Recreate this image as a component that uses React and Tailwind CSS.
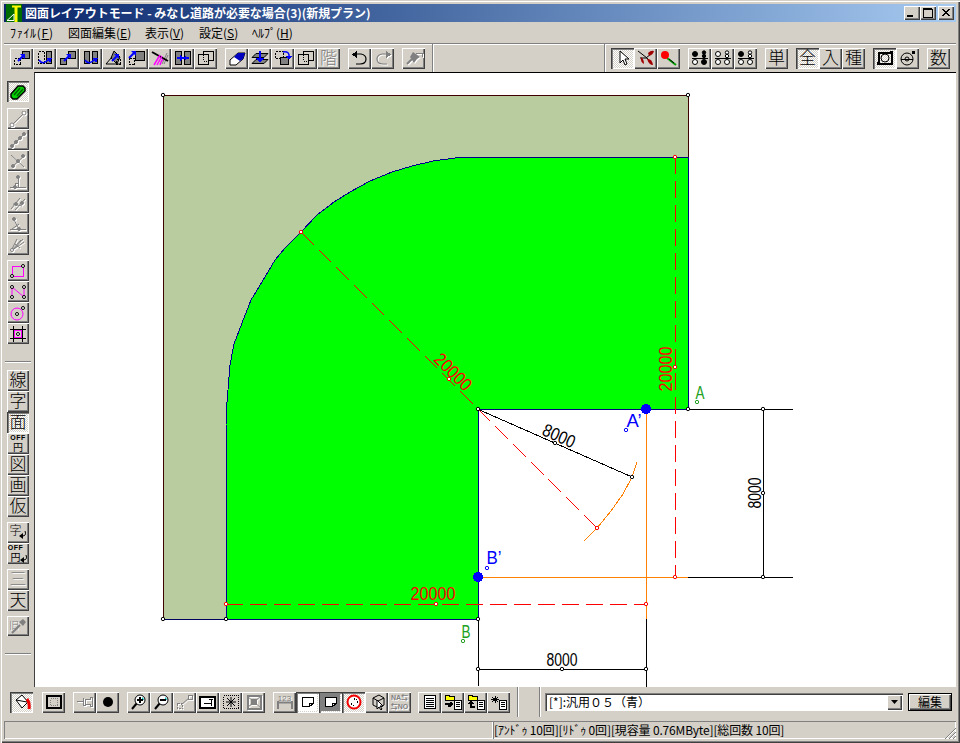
import React from "react";

const FONT = "[font-family:'Noto_Sans_CJK_JP','Liberation_Sans',sans-serif]";
const KFONT = "[font-family:'Liberation_Sans','Noto_Sans_CJK_JP',sans-serif]";
const UP = "shadow-[inset_1px_1px_0_#fff,inset_-1px_-1px_0_#404040,inset_-2px_-2px_0_#808080]";
const DOWN = "shadow-[inset_1px_1px_0_#404040,inset_2px_2px_0_#808080,inset_-1px_-1px_0_#fff]";
const DITHER = "bg-[repeating-conic-gradient(#d4d0c8_0_25%,#fff_0_50%)] bg-[length:2px_2px]";
const BLUE = "#0000ff";
const GR = "#808080";
const MAG = "#ff00ff";

function Btn({ on, children, className = "w-[23px] h-[21px]" }) {
  return (
    <div className={`flex shrink-0 items-center justify-center ${className} ${on ? DOWN + " " + DITHER : UP}`}>
      {children}
    </div>
  );
}

function Ico({ off, children }) {
  return (
    <svg
      width="18"
      height="16"
      viewBox="0 0 18 16"
      fill="none"
      shapeRendering="crispEdges"
      className={off ? "drop-shadow-[1px_1px_0_#fff]" : ""}
    >
      {children}
    </svg>
  );
}

function Kanji({ off, children, size = "text-[17px]" }) {
  return (
    <span className={`${KFONT} ${size} font-light leading-none ${off ? "text-[#808080] [text-shadow:1px_1px_0_#fff]" : "text-black"}`}>
      {children}
    </span>
  );
}

const Arrow = ({ x = 0, y = 0 }) => (
  <g transform={`translate(${x} ${y})`} shapeRendering="auto">
    <path d="M1 8 L6 3" stroke={BLUE} strokeWidth="2" />
    <path d="M3 1 H8 V6 Z" fill={BLUE} />
  </g>
);
const Gray = (p) => <rect fill={GR} stroke="#000" {...p} />;
const Dash = (p) => <rect stroke="#000" strokeDasharray="2 1" {...p} />;
const Dot = ({ x, y, c = "#000", r = 1.5, f = "#fff" }) => <circle cx={x} cy={y} r={r} stroke={c} fill={f} shapeRendering="auto" />;
const Ln = ({ d, c = "#000", w = 1 }) => <path d={d} stroke={c} strokeWidth={w} shapeRendering="auto" />;
const Note = ({ fill = "#fff" }) => <path d="M3.5 3.5 H14.5 V9.5 L10.5 12.5 H3.5 Z M10.5 12.5 V9.5 H14.5" stroke="#000" fill={fill} />;
const List = ({ x = 0, y = 0, w = 7, h = 9 }) => (
  <g transform={`translate(${x} ${y})`}>
    <rect x=".5" y=".5" width={w} height={h} fill="#fff" stroke="#000" />
    <path d={`M2 2.5H${w - 1}M2 4.5H${w - 1}M2 6.5H${w - 1}`} stroke="#000" />
  </g>
);
const Folder = () => <path d="M1.5 1.5 H5 L6 2.5 H10.5 V6.5 H1.5 Z" fill="#ffff00" stroke="#000" />;
const Dots = ({ fill }) => (
  <>
    <circle cx="4" cy="4" r="2.500" fill={fill[0] ? "#000" : "#fff"} stroke="#000" shapeRendering="auto" />
    <circle cx="4" cy="12" r="2.500" fill={fill[2] ? "#000" : "#fff"} stroke="#000" shapeRendering="auto" />
    <circle cx="13" cy="2.500" r="1.700" fill={fill[1] ? "#000" : "#fff"} stroke="#000" shapeRendering="auto" />
    <circle cx="13" cy="6" r="1.700" fill={fill[1] ? "#000" : "#fff"} stroke="#000" shapeRendering="auto" />
    <path d="M1 8.500H17" stroke="#000" />
    <circle cx="13" cy="12" r="2.500" fill={fill[3] ? "#000" : "#fff"} stroke="#000" shapeRendering="auto" />
  </>
);

const topA = [
  <Ico><Dash x="1.5" y="8.5" width="6" height="6" /><Gray x="9.5" y="1.5" width="7" height="7" /><Arrow x="4" y="3" /></Ico>,
  <Ico><Dash x="2.5" y="1.5" width="6" height="12" /><Gray x="10.5" y="1.5" width="5" height="12" /><Ln d="M3 10 Q7 16 13 9" c={BLUE} w={1.5} /><path d="M11 8h5l-2 5z" fill={BLUE} /></Ico>,
  <Ico><Gray x="1.5" y="8.5" width="6" height="6" /><Gray x="9.5" y="1.5" width="7" height="7" /><Arrow x="4" y="3" /></Ico>,
  <Ico><Gray x="2.5" y="1.5" width="5" height="12" /><Gray x="10.5" y="1.5" width="5" height="12" /><Ln d="M3 10 Q7 16 13 9" c={BLUE} w={1.5} /><path d="M11 8h5l-2 5z" fill={BLUE} /></Ico>,
  <Ico><path d="M9 1 L15 7 L12 14 L6 8 Z" fill={GR} stroke="#000" shapeRendering="auto" /><Ln d="M1 14 L7 7 M1 14 H15" /><Dash x="11.5" y="9.5" width="4" height="5" /><Arrow x="6" y="3" /></Ico>,
  <Ico><Dash x="1.5" y="8.5" width="5" height="6" /><Gray x="7.5" y="1.5" width="9" height="9" /><Arrow x="0" y="0" /></Ico>,
  <Ico><Ln d="M11 14 L16 3 M13 14 L17 5" c={GR} /><Ln d="M1 2 L17 11" w={2} /><Ln d="M3 15 L9 5 M6 15 L11 6 M9 15 Q10 11 12 9" c={MAG} w={1.5} /></Ico>,
  <Ico><Gray x="1.5" y="1.5" width="6" height="13" /><Gray x="10.5" y="1.5" width="6" height="13" /><path d="M3 8H15" stroke={BLUE} strokeWidth="2" /><path d="M6 5v6l3-3zM12 5v6l-3-3z" fill={BLUE} /></Ico>,
  <Ico><rect x="6.5" y="1.5" width="10" height="9" stroke="#000" /><rect x="1.5" y="4.5" width="10" height="10" stroke="#000" fill="#d4d0c8" /><path d="M6.5 5V11H11" stroke="#000" strokeDasharray="1 1" /></Ico>,
];
const topB = [
  <Ico><path d="M2 10 L10 3 H17 L15 9 L8 15 H2 Z" fill="#fff" stroke="#000" shapeRendering="auto" /><path d="M6 7 L10 3 H17 L15 9 L12 11 Z" fill="#0000c0" shapeRendering="auto" /></Ico>,
  <Ico><path d="M5 3.5H17L13 7.5H1Z M5 9.5H17L13 13.5H1Z" fill={GR} stroke="#000" shapeRendering="auto" /><path d="M9 1V10" stroke={BLUE} strokeWidth="2" /><path d="M5 8h8l-4 5z" fill={BLUE} /></Ico>,
  <Ico><Dash x="1.5" y="1.5" width="8" height="7" /><Gray x="6.5" y="7.5" width="8" height="7" /><Ln d="M9 2 Q16 1 15 7" c={BLUE} w={1.5} /><path d="M12 6h6l-3 4z" fill={BLUE} /></Ico>,
  <Ico><rect x="6.5" y="1.5" width="10" height="9" stroke="#000" /><rect x="1.5" y="4.5" width="10" height="10" stroke="#000" fill="#d4d0c8" /><path d="M6.5 5V11H11" stroke="#000" strokeDasharray="1 1" /></Ico>,
  <Kanji off>階</Kanji>,
];
const topC = [
  <Ico><Ln d="M4 4 H10 Q15 5 15 9 Q15 14 9 14 H5" w={1.2} /><path d="M6 1V8L1 4.500Z" fill="#000" /></Ico>,
  <Ico off><Ln d="M14 4 H8 Q3 5 3 9 Q3 14 9 14 H13" c={GR} w={1.2} /><path d="M12 1V8L17 4.500Z" fill={GR} /></Ico>,
];
const topPin = (
  <Ico off><path d="M8 2 L15 7 L12 9 L9 13 L5 7 Z" fill={GR} shapeRendering="auto" /><Ln d="M2 14 L7 9" c={GR} w={2} /><path d="M11 3h6v4" stroke={GR} /></Ico>
);
const leaves = (
  <Ico><path d="M1 1 L10 8 L15 14 M3 8 L10 8 M9 8 L14 4" stroke="#000" shapeRendering="auto" /><path d="M11 3 Q14 0 17 1 Q16 5 12 6Z M10 9 Q15 8 16 15 Q12 15 10 9Z M4 7 Q7 9 7 14 Q3 12 4 7Z" fill="#a00000" shapeRendering="auto" /></Ico>
);
const dropper = (
  <Ico><Ln d="M7 8 L16 15" c="#00a000" w={2} /><Ln d="M9 9 L14 13" c="#000" w={1} /><circle cx="5" cy="5" r="4" fill="#ff0000" shapeRendering="auto" /></Ico>
);

const sideLines = [
  <Ico off><Ln d="M3 14 L15 2" c={GR} /><Dot x={3} y={14} c={GR} r={2} /><Dot x={15} y={2} c={GR} r={2} /></Ico>,
  <Ico off><Ln d="M3 14 L15 2" c={GR} /><Dot x={3} y={14} c={GR} f={GR} /><Dot x={7} y={10} c={GR} f={GR} /><Dot x={11} y={6} c={GR} f={GR} /><Dot x={15} y={2} c={GR} f={GR} /></Ico>,
  <Ico off><Ln d="M2 2 L15 14 M3 14 L16 2" c={GR} /><Dot x={4} y={13} c={GR} f={GR} /><Dot x={14} y={3} c={GR} f={GR} /><Dot x={9} y={8} c={GR} f={GR} /></Ico>,
  <Ico off><path d="M1 13.500H17M9 2V13M6 13V9H9" stroke={GR} /><Dot x={9} y={3} c={GR} f={GR} /><Dot x={6} y={13} c={GR} f={GR} /></Ico>,
  <Ico off><Ln d="M2 14 L11 3 M6 15 L16 4 M4 9 L13 11" c={GR} /><Dot x={7} y={9} c={GR} f={GR} /><Dot x={13} y={8} c={GR} f={GR} /></Ico>,
  <Ico off><path d="M1 13.500H17" stroke={GR} /><Ln d="M4 2 L10 13 M10 8 L3 13" c={GR} /><Dot x={5} y={3} c={GR} f={GR} /><Dot x={10} y={13} c={GR} f={GR} /></Ico>,
  <Ico off><Ln d="M2 14 L8 2 M2 14 L12 3 M2 14 L15 5 M5 12 L14 2 M6 7 L11 11" c={GR} /><Dot x={3} y={13} c={GR} /></Ico>,
];
const sideShapes = [
  <Ico><rect x="3.5" y="3.5" width="11" height="10" stroke={MAG} /><Dot x={3} y={13} /><Dot x={14} y={3} /></Ico>,
  <Ico><Ln d="M3 13 V3 L15 13 V3" c={MAG} /><Dot x={3} y={3} /><Dot x={3} y={13} /><Dot x={15} y={3} /><Dot x={15} y={13} /></Ico>,
  <Ico><circle cx="8" cy="9" r="6" stroke={MAG} shapeRendering="auto" /><Dot x={8} y={9} /><Dot x={14} y={3} /></Ico>,
  <Ico><rect x="4" y="3" width="10" height="10" fill={MAG} /><rect x="6" y="5" width="6" height="6" fill="#d4d0c8" /><path d="M1 3.500H17M1 12.500H17M4.500 0V16M13.500 0V16" stroke="#000" /><Dot x={9} y={8} /></Ico>,
];
const offText = (
  <span className={`${KFONT} flex flex-col items-center text-black`}>
    <span className="text-[7px] font-bold leading-[8px] tracking-[0.5px]">OFF</span>
    <span className="text-[10px] leading-[12px]">円</span>
  </span>
);
const backArrow = (
  <svg width="8" height="9" viewBox="0 0 8 9" fill="none" className="-ml-[3px] self-end">
    <path d="M6 0 Q8 5 3 5" stroke="#000" />
    <path d="M4 2V8L0 5Z" fill="#000" />
  </svg>
);

const bottomA = [
  <Ico><path d="M3 6 L9 1 L15 8 L9 14 Z" fill="#fff" stroke="#000" shapeRendering="auto" /><Ln d="M14 5 Q17 9 16 15" c="#f00000" w={3} /><Ln d="M3 6 L14 8" /></Ico>,
];
const bottomB = (
  <Ico><rect x="2" y="2" width="14" height="12" stroke="#000" strokeWidth="2" /><rect x="5.500" y="4.500" width="7" height="7" stroke={GR} strokeDasharray="1 1" /></Ico>
);
const pin = (
  <Ico off><path d="M1 7.500H7 M7 4V11H9V5H14V3H16V12H14V10H9" stroke={GR} /></Ico>
);
const zoomIco = (sign) => (
  <Ico>
    <Ln d="M2 15 L7 9" w={2} />
    <circle cx="10" cy="6" r="5" fill="#fff" stroke="#000" shapeRendering="auto" />
    <path d="M12 3 A4 4 0 0 1 14 6 H12Z" fill="#00c0c0" shapeRendering="auto" />
    <path d={sign ? "M7 6H13M10 3V9" : "M7 6H13"} stroke="#000" strokeWidth="2" />
  </Ico>
);
const bottomC = [
  zoomIco(true),
  zoomIco(false),
  <Ico off><Dash x="1.500" y="9.500" width="5" height="5" stroke={GR} /><rect x="12.500" y="1.500" width="4" height="4" stroke={GR} /><Ln d="M5 11 L13 4" c={GR} /></Ico>,
  <Ico><rect x="1" y="3" width="15" height="11" stroke="#000" strokeWidth="2" fill="#fff" /><path d="M5 9H12M12 5V12M10 5H14" stroke="#000" /></Ico>,
  <Ico><rect x="1.500" y="1.500" width="15" height="13" stroke="#000" strokeDasharray="1 1" /><Ln d="M9 3V13M4 8H14M5 4L13 12M13 4L5 12" c="#000" /></Ico>,
  <Ico off><rect x="2.500" y="1.500" width="13" height="13" stroke={GR} strokeWidth="2" /><rect x="6" y="5" width="6" height="6" fill={GR} /><Ln d="M2 14 L16 2 M2 2 L16 14" c={GR} /></Ico>,
];
const bottomD = [
  { el: <span className="relative flex h-[16px] w-[18px] justify-center"><span className={`${KFONT} text-[8px] leading-[9px] text-[#808080] [text-shadow:1px_1px_0_#fff]`}>123</span><svg width="18" height="16" viewBox="0 0 18 16" fill="none" className="absolute left-0 top-0"><path d="M2 7V15M16 7V15M1 8.500H17" stroke={GR} strokeWidth="2" /></svg></span> },
  { on: true, el: <Ico><Note /></Ico>, white: true },
  { on: true, el: <Ico><Note /></Ico>, dark: true },
  { on: true, el: <Ico><circle cx="9" cy="8" r="6.500" fill="#fff" stroke="#f00000" strokeWidth="2" shapeRendering="auto" /><path d="M6 9v2M9 4v2M12 7v2M8 11h1M11 5h1" stroke="#000" /></Ico> },
  { el: <Ico><path d="M5 4 L11 1 L16 4 V11 L11 14 L5 11 Z M5 4 L10 7 V14 M10 7 L16 4" stroke="#000" shapeRendering="auto" /><path d="M9 6 L9 15 L11 13 L13 16 L14 15 L12 12 L15 12 Z" fill="#fff" stroke="#000" shapeRendering="auto" /></Ico> },
  { el: <span className={`${KFONT} flex flex-col items-center text-[7px] font-bold leading-[9px] text-[#808080] [text-shadow:1px_1px_0_#fff]`}><span>NA⇆</span><span>⇆NO</span></span> },
];
const bottomE = [
  <Ico><rect x="3.500" y="1.500" width="11" height="13" fill="#fff" stroke="#000" /><path d="M5 4H13M5 6H13M5 8H13M5 10H13M5 12H13" stroke="#000" /></Ico>,
  <Ico><Folder /><path d="M1 9.500H5V13" stroke="#000" strokeWidth="2" /><path d="M6 7.500L10 10L6 13Z" fill="#000" /><List x={10} y={6} /></Ico>,
  <Ico><Folder /><path d="M8 12.500H4V9" stroke="#000" strokeWidth="2" /><path d="M1 9.500L4 6L7 9.500Z" fill="#000" /><List x={10} y={6} /></Ico>,
  <Ico><path d="M5 2V9M2 3L8 8M8 3L2 8M1 5.500H9" stroke="#000" /><List x={9} y={6} /></Ico>,
];

function Sep() {
  return <div className="h-full w-[2px] shrink-0 border-l border-l-[#808080] border-r border-r-white" />;
}

function TopBar() {
  return (
    <div className="flex h-[29px] shrink-0 items-center border-t border-t-[#808080] shadow-[inset_0_1px_0_#fff] pl-[6px]">
      <div className="flex">{topA.map((x, i) => <Btn key={i}>{x}</Btn>)}</div>
      <div className="ml-[8px] flex">{topB.map((x, i) => <Btn key={i}>{x}</Btn>)}</div>
      <div className="ml-[8px] flex">{topC.map((x, i) => <Btn key={i}>{x}</Btn>)}</div>
      <div className="ml-[8px] flex"><Btn>{topPin}</Btn></div>
      <div className="ml-[7px]"><div className="h-[29px]"><Sep /></div></div>
      <div className="ml-[170px] h-[29px]"><Sep /></div>
      <div className="ml-[5px] flex">
        <Btn on><Ico><path d="M6 1 V13 L9 10 L11 15 L13 14 L11 9 L15 9 Z" fill="#fff" stroke="#000" shapeRendering="auto" /></Ico></Btn>
        <Btn>{leaves}</Btn>
        <Btn>{dropper}</Btn>
      </div>
      <div className="ml-[8px] flex">
        <Btn><Ico><Dots fill={[1, 1, 0, 1]} /></Ico></Btn>
        <Btn><Ico><Dots fill={[0, 0, 0, 0]} /></Ico></Btn>
        <Btn><Ico><Dots fill={[1, 0, 0, 0]} /></Ico></Btn>
      </div>
      <div className="ml-[8px] flex"><Btn><Kanji>単</Kanji></Btn></div>
      <div className="ml-[8px] flex">
        <Btn on><Kanji>全</Kanji></Btn>
        <Btn><Kanji>入</Kanji></Btn>
        <Btn><Kanji>種</Kanji></Btn>
      </div>
      <div className="ml-[8px] flex">
        <Btn on><Ico><rect x="2.500" y="2.500" width="13" height="11" stroke="#000" strokeWidth="2" /><circle cx="9" cy="8" r="4" stroke="#000" shapeRendering="auto" /><rect x="14" y="1" width="3" height="3" fill="#000" /><rect x="1" y="12" width="3" height="3" fill="#000" /></Ico></Btn>
        <Btn><Ico><circle cx="8" cy="9" r="6" stroke="#000" shapeRendering="auto" /><circle cx="8" cy="9" r="2" stroke="#000" shapeRendering="auto" /><path d="M2 9H14" stroke="#000" /><rect x="13" y="1" width="3" height="3" fill="#000" /></Ico></Btn>
      </div>
      <div className="ml-[8px] flex"><Btn><Kanji>数</Kanji></Btn></div>
    </div>
  );
}

function SideBar() {
  const s = "w-[22px] h-[21px]";
  return (
    <div className="flex w-[30px] shrink-0 flex-col items-start pl-[3px] pt-[9px]">
      <Btn on className={s}>
        <Ico><path d="M2 10 L9 2 H14 L16 4 V7 L8 15 H4 L2 13 Z" fill="#00d000" stroke="#000" strokeWidth="1.500" shapeRendering="auto" /><path d="M5 11 L11 4 M8 12 L14 5" stroke="#006000" strokeWidth="1.500" shapeRendering="auto" /></Ico>
      </Btn>
      <div className="mt-[6px] flex flex-col">{sideLines.map((x, i) => <Btn key={i} className={s}>{x}</Btn>)}</div>
      <div className="mt-[5px] flex flex-col">{sideShapes.map((x, i) => <Btn key={i} className={s}>{x}</Btn>)}</div>
      <div className="mt-[17px] h-[2px] w-[26px] -ml-[2px] border-t border-t-[#808080] border-b border-b-white" />
      <div className="mt-[7px] flex flex-col">
        <Btn className={s}><Kanji>線</Kanji></Btn>
        <Btn className={s}><Kanji>字</Kanji></Btn>
        <Btn on className={s}><Kanji>面</Kanji></Btn>
        <Btn className={s}>{offText}</Btn>
        <Btn className={s}><Kanji>図</Kanji></Btn>
        <Btn className={s}><Kanji>画</Kanji></Btn>
        <Btn className={s}><Kanji>仮</Kanji></Btn>
      </div>
      <div className="mt-[5px] flex flex-col">
        <Btn className={s}><span className="flex h-[15px] items-start"><Kanji size="text-[12px]">字</Kanji>{backArrow}</span></Btn>
        <Btn className={s}><span className="flex h-[20px] items-center">{offText}{backArrow}</span></Btn>
      </div>
      <div className="mt-[5px] flex flex-col">
        <Btn className={s}><Kanji off>三</Kanji></Btn>
        <Btn className={s}><Kanji>天</Kanji></Btn>
      </div>
      <div className="mt-[5px]">
        <Btn className="w-[22px] h-[20px]">
          <span className="relative flex h-[16px] w-[18px] items-center">
            <Kanji off size="text-[10px]">旧</Kanji>
            <svg width="18" height="16" viewBox="0 0 18 16" fill="none" className="absolute left-0 top-0"><path d="M3 15 L11 7" stroke={GR} strokeWidth="2" /><path d="M10 4 L14 1 L17 4 L14 8 Z" fill={GR} /></svg>
          </span>
        </Btn>
      </div>
      <div className="mt-[17px] h-[2px] w-[26px] -ml-[2px] border-t border-t-[#808080] border-b border-b-white" />
    </div>
  );
}

function Mark({ x, y, c = "#000" }) {
  return <circle cx={x} cy={y} r="1.700" fill="#fff" stroke={c} shapeRendering="auto" />;
}

function Num({ x, y, r = 0, c, w = 45, children }) {
  return (
    <text
      x={x}
      y={y}
      transform={`rotate(${r} ${x} ${y})`}
      fill={c}
      fontFamily="'Liberation Sans', sans-serif"
      fontSize="18"
      textAnchor="middle"
      textLength={w}
      lengthAdjust="spacingAndGlyphs"
      dominantBaseline="central"
    >
      {children}
    </text>
  );
}

function Drawing() {
  const arc = "226,425 227,402 230,365 234,344 242,323 251,300 262,282 275,260 285,248 301,232 317,215 334,202 350,192 370,181 392,172 412,166 433,161 455,158 478,157";
  const red = "#ff0000";
  const dash = "17 7";
  return (
    <svg width="920" height="614" viewBox="35 73 920 614" className="block" shapeRendering="crispEdges">
      <polygon points={`163,95 688,95 688,157 ${arc.split(" ").reverse().join(" ")} 226,619 163,619`} fill="#b8cca0" />
      <polygon points={`226,619 ${arc} 688,157 688,409 478,409 478,619`} fill="#00ff00" />
      <path d="M163.500 619.500 V95.500 H688.500 V157" stroke="#400000" fill="none" />
      <path d="M163 619.500 H226" stroke="#000060" fill="none" />
      <polyline points={`226,619 ${arc}`} stroke="#000090" fill="none" />
      <path d="M478 157.500 H688.500 V409.500 H478.500 V619.500 H226" stroke="#000080" fill="none" />

      <path d="M688 409.500 H793 M688 577.500 H793 M763.500 409 V577 M478.500 619 V686 M646.500 619 V687 M478 669.500 H646" stroke="#000" fill="none" />
      <path d="M478 577.500 H688 M646.500 409 V619" stroke="#ff8000" fill="none" />
      <polyline points="637,462 632,477 623,494 611,511 597,528 584,541" stroke="#ff8000" fill="none" />
      <path d="M478.500 409.500 L632 477" stroke="#000" fill="none" />

      <path d="M675.500 157 V577 M226 604.500 H646" stroke={red} fill="none" strokeDasharray={dash} />
      <path d="M301 232 L597 528" stroke={red} fill="none" strokeDasharray="18 7" />

      <Num x={453} y={372} r={45} c={red}>20000</Num>
      <Num x={666} y={369} r={-90} c={red}>20000</Num>
      <Num x={433} y={594} c={red}>20000</Num>
      <Num x={559} y={436} r={24} c="#000" w={34}>8000</Num>
      <Num x={755} y={493} r={-90} c="#000" w={31}>8000</Num>
      <Num x={562} y={660} c="#000" w={31}>8000</Num>

      {[[163, 95], [688, 95], [163, 619], [226, 619], [478, 619], [688, 409], [763, 409], [763, 493], [763, 577], [478, 669], [562, 669], [646, 669], [478, 409], [555, 443], [632, 477]].map(([x, y]) => (
        <Mark key={x + "-" + y} x={x} y={y} />
      ))}
      {[[301, 232], [675, 157], [675, 367], [675, 577], [597, 528], [646, 604], [226, 604], [436, 604], [449, 379]].map(([x, y]) => (
        <Mark key={x + "-" + y} x={x} y={y} c={red} />
      ))}

      <circle cx="646" cy="409" r="5" fill={BLUE} />
      <circle cx="478" cy="577" r="5" fill={BLUE} />

      <Num x={634} y={421} c={BLUE} w={15}>A’</Num>
      <Mark x={626} y={430} c={BLUE} />
      <Num x={494} y={558} c={BLUE} w={15}>B’</Num>
      <Mark x={487} y={568} c={BLUE} />
      <Num x={700} y={393} c="#20a020" w={9}>A</Num>
      <Mark x={697} y={402} c="#20a020" />
      <Num x={466} y={632} c="#20a020" w={9}>B</Num>
      <Mark x={463} y={641} c="#20a020" />
    </svg>
  );
}

function BottomBar() {
  return (
    <div className="flex h-[30px] shrink-0 items-center pl-[6px]">
      <Btn on>{bottomA[0]}</Btn>
      <div className="ml-[9px]"><Btn>{bottomB}</Btn></div>
      <div className="ml-[8px] flex">
        <Btn>{pin}</Btn>
        <Btn><Ico><circle cx="9" cy="8" r="5" fill="#000" shapeRendering="auto" /></Ico></Btn>
      </div>
      <div className="ml-[8px] flex">{bottomC.map((x, i) => <Btn key={i}>{x}</Btn>)}</div>
      <div className="ml-[8px] flex">
        {bottomD.map((b, i) => (
          <div key={i} className="relative">
            <Btn on={b.on}>
              {b.white && <span className="absolute inset-[2px] bg-white" />}
              {b.dark && <span className="absolute inset-[2px] bg-[#808080]" />}
              <span className="relative flex">{b.el}</span>
            </Btn>
          </div>
        ))}
      </div>
      <div className="ml-[7px] flex">{bottomE.map((x, i) => <Btn key={i}>{x}</Btn>)}</div>
      <div className="ml-[7px] h-[30px]"><Sep /></div>
      <div className="ml-[20px] h-[30px]"><Sep /></div>
      <div className="ml-[4px] flex h-[18px] w-[358px] items-center justify-between bg-white pl-[4px] pr-[1px] shadow-[inset_1px_1px_0_#808080,inset_2px_2px_0_#404040,inset_-1px_-1px_0_#fff]">
        <span className={`${FONT} text-[12px] leading-none text-black`}>[*]:汎用０５（青）</span>
        <span className={`flex h-[15px] w-[15px] items-center justify-center bg-[#d4d0c8] ${UP}`}>
          <svg width="7" height="4" viewBox="0 0 7 4"><path d="M0 0H7L3.500 4Z" fill="#000" /></svg>
        </span>
      </div>
      <div className={`${FONT} ml-[5px] flex h-[18px] w-[44px] items-center justify-center border border-black text-[12px] leading-none text-black ${UP}`}>
        編集
      </div>
    </div>
  );
}

function StatusBar() {
  return (
    <div className="flex h-[18px] shrink-0 mt-[4px] text-black">
      <div className="w-[489px] shadow-[inset_1px_1px_0_#808080,inset_-1px_-1px_0_#fff]" />
      <div className={`${FONT} flex flex-1 items-center pl-[1px] text-[12px] leading-none tracking-[-0.15px] shadow-[inset_1px_1px_0_#808080,inset_-1px_-1px_0_#fff]`}>
        [ｱﾝﾄﾞｩ 10回][ﾘﾄﾞｩ 0回][現容量 0.76MByte][総回数 10回]
        <svg width="12" height="12" viewBox="0 0 12 12" className="ml-auto self-end" fill="none">
          <path d="M1 12L12 1M5 12L12 5M9 12L12 9" stroke="#808080" />
          <path d="M2 12L12 2M6 12L12 6M10 12L12 10" stroke="#fff" />
        </svg>
      </div>
    </div>
  );
}

export default function App() {
  const menu = [
    ["ﾌｧｲﾙ(", "F", ")", "w-[58px] tracking-[0.7px]"],
    ["図面編集(", "E", ")", "w-[77px]"],
    ["表示(", "V", ")", "w-[54px]"],
    ["設定(", "S", ")", "w-[53px]"],
    ["ﾍﾙﾌﾟ(", "H", ")", "w-[50px]"],
  ];
  return (
    <div className="flex h-[743px] w-[960px] flex-col overflow-hidden bg-[#d4d0c8] p-[4px] shadow-[inset_1px_1px_0_#d4d0c8,inset_2px_2px_0_#fff,inset_-1px_-1px_0_#404040,inset_-2px_-2px_0_#808080]">
      <div className="flex h-[18px] shrink-0 items-center bg-gradient-to-r from-[#0a246a] to-[#a6caf0] pl-[1px] pr-[2px]">
        <svg width="17" height="18" viewBox="0 0 17 18" className="shrink-0" fill="none">
          <rect x="1" y="0" width="16" height="18" fill="#006c00" />
          <path d="M7 2.500H16" stroke="#ffff00" strokeWidth="2" />
          <path d="M11 2V18" stroke="#ffff00" strokeWidth="3" />
          <path d="M2 16.500H9V10Z" fill="none" stroke="#fff" />
        </svg>
        <span className={`${FONT} ml-[3px] whitespace-nowrap text-[12px] font-bold leading-none tracking-[-0.05px] text-white`}>
          図面レイアウトモード - みなし道路が必要な場合(3)(新規プラン)
        </span>
        <div className="ml-auto flex">
          {[
            <path d="M3 10H9" stroke="#000" strokeWidth="2" />,
            <path d="M3 3.500H12V11.500H3Z M3 2.500H12" stroke="#000" />,
            <path d="M4 3L11 10M5 3L12 10M11 3L4 10M12 3L5 10" stroke="#000" />,
          ].map((g, i) => (
            <div key={i} className={`h-[14px] w-[16px] bg-[#d4d0c8] ${i === 2 ? "ml-[2px]" : ""} ${UP}`}>
              <svg width="16" height="14" viewBox="0 0 16 14" fill="none" shapeRendering="crispEdges">{g}</svg>
            </div>
          ))}
        </div>
      </div>

      <div className={`${FONT} flex h-[21px] shrink-0 items-center pl-[6px] text-[12px] leading-none text-black`}>
        {menu.map(([a, k, b, w]) => (
          <span key={k} className={`${w} whitespace-nowrap`}>
            {a}<span className="underline">{k}</span>{b}
          </span>
        ))}
      </div>

      <TopBar />

      <div className="flex min-h-0 flex-1">
        <SideBar />
        <div className="flex-1 border-l border-t border-l-[#404040] border-t-black bg-white">
          <Drawing />
        </div>
      </div>

      <BottomBar />
      <StatusBar />
    </div>
  );
}
